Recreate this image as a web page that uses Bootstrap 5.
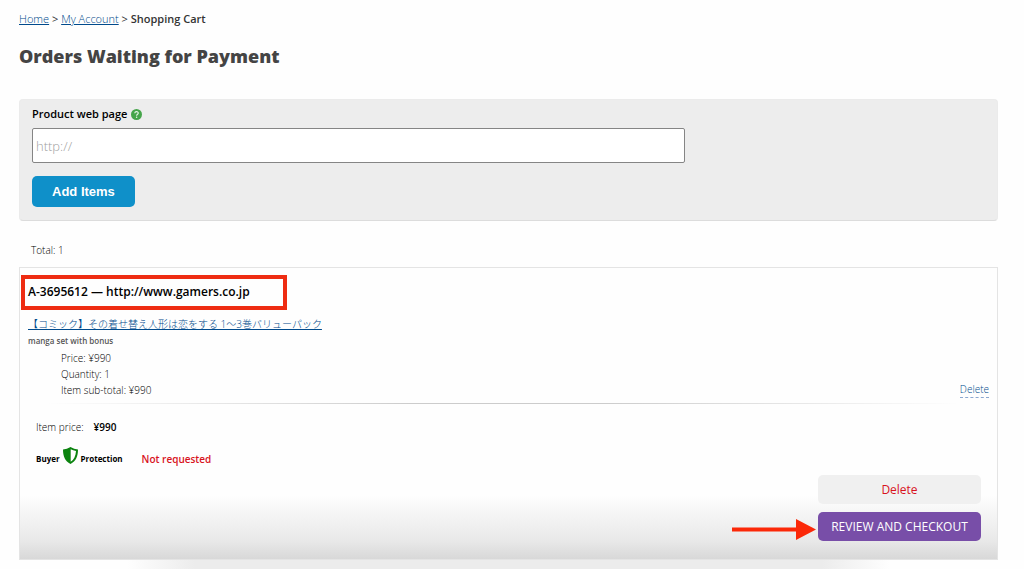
<!DOCTYPE html>
<html lang="en">
<head>
<meta charset="utf-8">
<meta name="viewport" content="width=device-width, initial-scale=1">
<title>Shopping Cart</title>
<link href="https://cdn.jsdelivr.net/npm/bootstrap@5.3.0/dist/css/bootstrap.min.css" rel="stylesheet">
<style>
body { font: 300 10px/16px "Open Sans", "Noto Sans CJK JP", sans-serif; color: #000; background: #fefefe; }
a { color: #004a8c; }
.page { padding: 11px 26px 0 19px; }
.crumbs { font-size: 11px; margin-bottom: 17px; color: #333; }
.crumbs span { font-weight: 400; }
.crumbs .here { font-weight: 600; }
h1 { font-size: 18px; line-height: 24px; font-weight: 800; color: #444; margin-bottom: 31px; }
.add-panel { background: #ededed; border: 1px solid #ebebeb; border-bottom-color: #dcdcdc; border-radius: 4px; padding: 6px 12px 13px; }
.label-row { margin-bottom: 6px; }
.add-panel label { font-size: 11px; font-weight: 600; color: #000; }
.url-box { font-size: 13px; font-weight: 300; height: 35px; padding: 0 3px; border: 1px solid #858585; border-radius: 2px; width: 100%; max-width: 653px; }
.url-box + .btn { margin-top: 13px; }
.url-box::placeholder { color: #a0a0a0; opacity: 1; }
.btn-add { background: #0f90c9; color: #fff; font: 700 13px/31px "Liberation Sans", sans-serif; padding: 0 20px; border: 0; border-radius: 5px; }
.total { padding: 0 12px; margin: 21px 0 9px; }
.order { border: 1px solid #e4e4e4; background: linear-gradient(#fefefe 78%, #e8e8e8 94%, #d8d8d8 100%); padding: 7px 8px 18px; }
.callout { border: 4px solid #ee2c12; padding: 3px 33px 4px 3px; margin-left: -7px; }
.callout h2 { font-size: 12px; line-height: 20px; font-weight: 600; color: #000; margin: 0; }
.product { margin-top: 6px; }
.note { font-size: 8px; line-height: 18px; font-weight: 600; color: #555; }
.details { padding-left: 33px; margin: 0; }
.item-line { padding-bottom: 5px; }
.remove { text-decoration: none; border-bottom: 1px dashed #8ca8d0; }
.rule { height: 1px; background: linear-gradient(90deg, transparent 2%, #ccc 40%, #ccc 60%, transparent 97%); }
.sum { padding-left: 8px; margin-top: 15px; gap: 10px; }
.sum strong, .protect strong { font-weight: 600; color: #000; }
.protect { padding-left: 8px; margin-top: 12px; height: 24px; }
.protect svg { margin: 0 3px; }
.protect strong { font-size: 8px; font-weight: 700; }
.protect .state { font-size: 10px; font-weight: 600; color: #d8131d; margin-left: 19px; }
.actions { width: 163px; gap: 8px; margin: 4px 8px 0 auto; }
.actions .btn { font-size: 12px; line-height: 29px; padding: 0; border: 0; border-radius: 5px; font-weight: 400; }
.btn-del { background: #f0f0f0; color: #d8131d; }
.btn-pay { background: #784ea8; color: #fff; }
.arrow { right: 100%; bottom: 1px; margin-right: 2px; }
.next-edge { height: 9px; background: linear-gradient(90deg, transparent 11%, #ececec 18%, #ececec 82%, transparent 89%); }
</style>
</head>
<body>
<main class="page">
  <nav class="crumbs" aria-label="Breadcrumb"><a href="#">Home</a> <span>&gt;</span> <a href="#">My Account</a> <span>&gt;</span> <span class="here">Shopping Cart</span></nav>
  <h1>Orders Waiting for Payment</h1>

  <form class="add-panel">
    <div class="d-flex align-items-center gap-1 label-row">
      <label for="url">Product web page</label>
      <svg width="11" height="11" viewBox="0 0 22 22" role="img" aria-label="Help"><circle cx="11" cy="11" r="11" fill="#45a54a"/><path d="M7.500 8.500C7.800 4 15 4.500 14.500 8.500C14.300 10.600 11.200 10.600 11.200 13.500" fill="none" stroke="#e8f5e9" stroke-width="2.300"/><circle cx="11.200" cy="16.700" r="1.500" fill="#e8f5e9"/></svg>
    </div>
    <input id="url" class="url-box d-block" type="text" placeholder="http://">
    <button type="button" class="btn btn-add">Add Items</button>
  </form>

  <div class="total">Total: 1</div>

  <section class="order">
    <div class="callout d-inline-block align-top"><h2>A-3695612 — http://www.gamers.co.jp</h2></div>
    <div class="product"><a href="#">【コミック】その着せ替え人形は恋をする 1～3巻バリューパック</a></div>
    <div class="note">manga set with bonus</div>
    <div class="item-line d-flex justify-content-between align-items-end">
      <ul class="details list-unstyled">
        <li>Price: ¥990</li>
        <li>Quantity: 1</li>
        <li>Item sub-total: ¥990</li>
      </ul>
      <a class="remove" href="#">Delete</a>
    </div>
    <div class="rule"></div>
    <div class="sum d-flex"><span>Item price:</span><strong>¥990</strong></div>
    <div class="protect d-flex align-items-center">
      <strong>Buyer</strong>
      <svg class="align-self-start" width="15" height="17" viewBox="0 0 15 17" aria-hidden="true"><path d="M7.500 0Q4 2.300 0 2.500C0 9.500 2 14 7.500 17C13 14 15 9.500 15 2.500Q11 2.300 7.500 0Z" fill="#0b830f"/><path d="M7.700 2.300Q10 3.600 13 4C12.700 9 11 12.700 7.700 14.800Z" fill="#fff"/></svg>
      <strong>Protection</strong>
      <span class="state">Not requested</span>
    </div>
    <div class="actions d-grid position-relative">
      <button type="button" class="btn btn-del">Delete</button>
      <button type="button" class="btn btn-pay">REVIEW AND CHECKOUT</button>
      <svg class="arrow position-absolute" width="84" height="21" viewBox="0 0 84 21" aria-hidden="true"><path d="M0 8.500H64V0L84 10.500L64 21V12.500H0Z" fill="#fb2808"/></svg>
    </div>
  </section>
  <div class="next-edge"></div>
</main>
<script src="https://cdn.jsdelivr.net/npm/bootstrap@5.3.0/dist/js/bootstrap.bundle.min.js"></script>
</body>
</html>
